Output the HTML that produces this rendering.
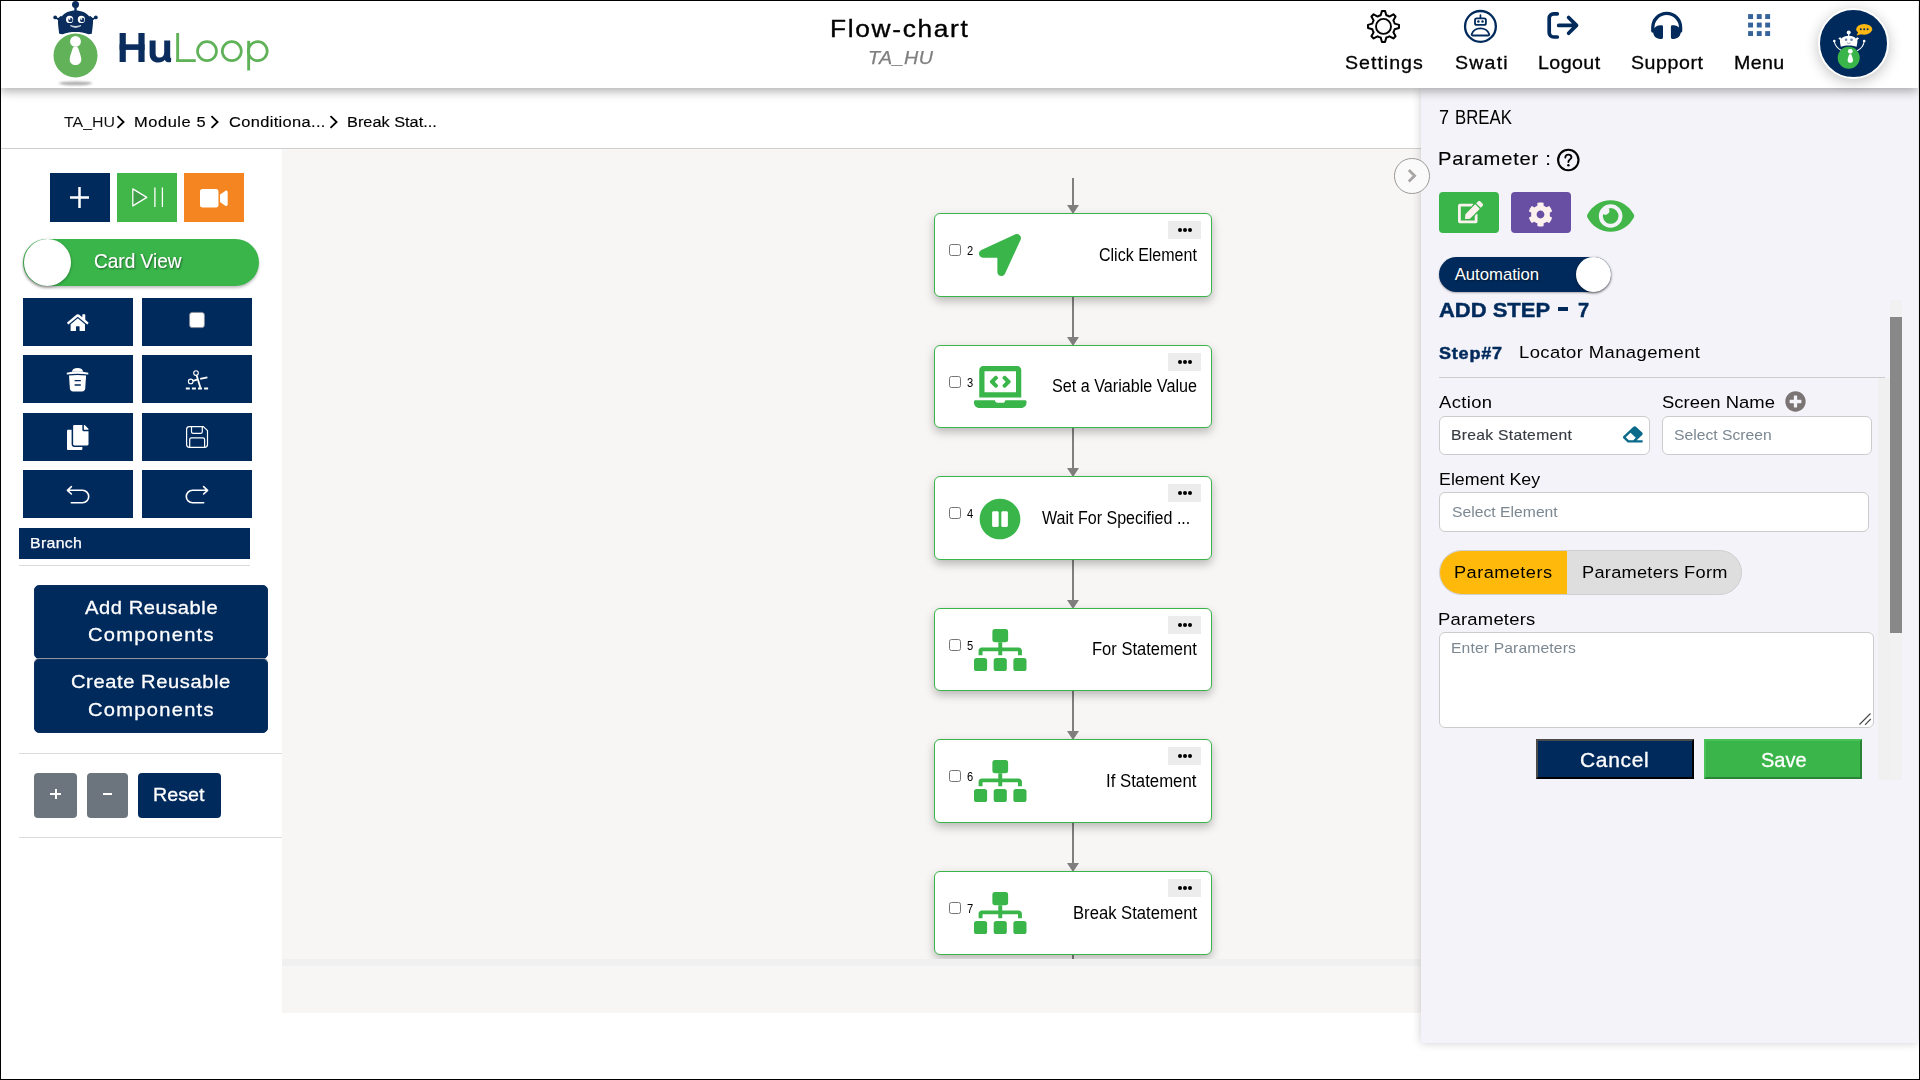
<!DOCTYPE html>
<html lang="en">
<head>
<meta charset="utf-8">
<title>Flow-chart</title>
<style>
*{box-sizing:border-box;margin:0;padding:0}
html,body{width:1920px;height:1080px;overflow:hidden;background:#fff;font-family:"Liberation Sans",sans-serif;color:#000}
#app{position:absolute;left:0;top:0;width:1920px;height:1080px;overflow:hidden;background:#fff}
.abs{position:absolute}
.t{position:absolute;white-space:pre;line-height:1;transform-origin:0 0;font-family:"Liberation Sans",sans-serif}
.m{-webkit-text-stroke:0.35px currentColor}
svg{position:absolute;overflow:visible}
.navy{background:#012a5c}
/* frame */
#frame{position:absolute;left:0;top:0;width:1920px;height:1080px;border:1px solid #000;z-index:100;pointer-events:none}
/* header */
#header{position:absolute;left:0;top:0;width:1918px;height:88px;background:#fff;box-shadow:0 3px 10px rgba(0,0,0,.33);z-index:20}
/* breadcrumb line */
#bcline{position:absolute;left:0;top:148px;width:1421px;height:1px;background:#cfcfcf}
/* canvas */
#canvas{position:absolute;left:282px;top:149px;width:1140px;height:810px;background:#f7f6f4;overflow:hidden}
#canvas2{position:absolute;left:282px;top:959px;width:1140px;height:54px;background:#f7f6f4}
#hscroll{position:absolute;left:0;top:0;width:1140px;height:7px;background:#f0f0f0}
.card{position:absolute;left:652px;width:278px;height:84px;background:#fff;border:1px solid #3bb44a;border-radius:6px;box-shadow:0 4px 10px rgba(0,0,0,.26)}
.dots{position:absolute;left:233px;top:7px;width:33px;height:18px;background:#ececec}
.dots i{position:absolute;top:6.8px;width:4.1px;height:4.1px;border-radius:50%;background:#000}
.cb{position:absolute;left:14px;top:30px;width:12px;height:12px;border:1px solid #767676;border-radius:2.5px;background:#fff}
.vline{position:absolute;left:790px;width:2px;background:#7f7f7f}
.ah{position:absolute;left:785px;width:0;height:0;border-left:6px solid transparent;border-right:6px solid transparent;border-top:9px solid #7f7f7f}
/* sidebar */
.sbtn{position:absolute;background:#012a5c}
.hr{position:absolute;height:1px;background:#dcdcdc}
/* panel */
#panel{position:absolute;left:1421px;top:88px;width:497px;height:955px;background:#f3f3f9;box-shadow:0 0 9px rgba(0,0,0,.2);z-index:10}
.inp{position:absolute;background:#fff;border:1px solid #cccccc;border-radius:6px}
</style>
</head>
<body>
<div id="app">

<!-- ================= BREADCRUMB ================= -->
<div id="bcline"></div>
<span class="t" style="left:63.80px;top:114px;font-size:15.5px;letter-spacing:0.000px;transform:scaleX(1.0254);color:#111">TA_HU</span>
<span class="t" style="left:133.94px;top:114px;font-size:15.5px;letter-spacing:0.529px;transform:scaleX(1.0600);color:#000;-webkit-text-stroke:0.15px #000">Module 5</span>
<span class="t" style="left:229.00px;top:114px;font-size:15.5px;letter-spacing:0.325px;transform:scaleX(1.0600);color:#000;-webkit-text-stroke:0.15px #000">Conditiona...</span>
<span class="t" style="left:346.95px;top:114px;font-size:15.5px;letter-spacing:0.000px;transform:scaleX(1.0532);color:#000;-webkit-text-stroke:0.15px #000">Break Stat...</span>
<svg style="left:116px;top:115px" width="10" height="14" viewBox="0 0 10 14"><path d="M1.5 1.2 L7.6 7 L1.5 12.8" fill="none" stroke="#000" stroke-width="1.8"/></svg>
<svg style="left:209.5px;top:115px" width="10" height="14" viewBox="0 0 10 14"><path d="M1.5 1.2 L7.6 7 L1.5 12.8" fill="none" stroke="#000" stroke-width="1.8"/></svg>
<svg style="left:328.5px;top:115px" width="10" height="14" viewBox="0 0 10 14"><path d="M1.5 1.2 L7.6 7 L1.5 12.8" fill="none" stroke="#000" stroke-width="1.8"/></svg>

<!-- ================= SIDEBAR ================= -->
<div id="sidebar">
  <div class="sbtn" style="left:50px;top:173px;width:60px;height:49px"></div>
  <div class="sbtn" style="left:117px;top:173px;width:60px;height:49px;background:#41b649"></div>
  <div class="sbtn" style="left:184px;top:173px;width:60px;height:49px;background:#f58521"></div>

  <div class="abs" style="left:23px;top:239px;width:236px;height:47px;border-radius:24px;background:#3ab54a;box-shadow:0 2px 3px rgba(0,0,0,.25)"></div>
  <div class="abs" style="left:24px;top:239px;width:47px;height:47px;border-radius:50%;background:#fff;box-shadow:0 1px 3px rgba(0,0,0,.35)"></div>
  <span class="t" style="left:94.06px;top:251px;font-size:20.3px;letter-spacing:0.000px;transform:scaleX(0.9401);color:#fff;text-shadow:1px 1px 2px rgba(0,0,0,.5);-webkit-text-stroke:0.15px #fff">Card View</span>

  <div class="sbtn" style="left:23px;top:298px;width:110px;height:48px"></div>
  <div class="sbtn" style="left:142px;top:298px;width:110px;height:48px"></div>
  <div class="sbtn" style="left:23px;top:355px;width:110px;height:48px"></div>
  <div class="sbtn" style="left:142px;top:355px;width:110px;height:48px"></div>
  <div class="sbtn" style="left:23px;top:413px;width:110px;height:48px"></div>
  <div class="sbtn" style="left:142px;top:413px;width:110px;height:48px"></div>
  <div class="sbtn" style="left:23px;top:470px;width:110px;height:48px"></div>
  <div class="sbtn" style="left:142px;top:470px;width:110px;height:48px"></div>

  <div class="sbtn" style="left:19px;top:528px;width:231px;height:31px"></div>
  <span class="t" style="left:30.44px;top:535px;font-size:15px;letter-spacing:0.291px;transform:scaleX(1.0600);color:#fff;-webkit-text-stroke:0.25px #fff">Branch</span>
  <div class="hr" style="left:19px;top:565px;width:231px"></div>

  <div class="sbtn" style="left:34px;top:585px;width:234px;height:74px;border-radius:5px;border:1px solid #0a2f5f"></div>
  <div class="sbtn" style="left:34px;top:659px;width:234px;height:74px;border-radius:5px;border:1px solid #0a2f5f;box-shadow:0 -1px 0 #8d939c"></div>
  <span class="t" style="left:84.70px;top:598px;font-size:19px;letter-spacing:0.521px;transform:scaleX(1.0600);color:#fff;-webkit-text-stroke:0.3px #fff">Add Reusable</span>
  <span class="t" style="left:88.30px;top:625px;font-size:19px;letter-spacing:1.188px;transform:scaleX(1.0600);color:#fff;-webkit-text-stroke:0.3px #fff">Components</span>
  <span class="t" style="left:71.40px;top:672px;font-size:19px;letter-spacing:0.543px;transform:scaleX(1.0600);color:#fff;-webkit-text-stroke:0.3px #fff">Create Reusable</span>
  <span class="t" style="left:88.30px;top:700px;font-size:19px;letter-spacing:1.188px;transform:scaleX(1.0600);color:#fff;-webkit-text-stroke:0.3px #fff">Components</span>
  <div class="hr" style="left:19px;top:753px;width:263px"></div>

  <div class="abs" style="left:34px;top:773px;width:43px;height:45px;border-radius:4px;background:#6c757d"></div>
  <div class="abs" style="left:87px;top:773px;width:41px;height:45px;border-radius:4px;background:#6c757d"></div>
  <div class="sbtn" style="left:138px;top:773px;width:83px;height:45px;border-radius:4px"></div>
  <div class="abs" style="left:50.200px;top:793px;width:10.600px;height:2px;background:#fff"></div>
  <div class="abs" style="left:54.500px;top:788.700px;width:2px;height:10.600px;background:#fff"></div>
  <div class="abs" style="left:103.400px;top:793px;width:8.400px;height:2px;background:#fff"></div>
  <span class="t" style="left:153.36px;top:785px;font-size:19px;letter-spacing:0.000px;transform:scaleX(1.0354);color:#fff;-webkit-text-stroke:0.3px #fff">Reset</span>
  <div class="hr" style="left:19px;top:837px;width:263px"></div>

  <!-- sidebar icons -->
  <svg style="left:0;top:149px" width="282" height="400" viewBox="0 149 282 400">
    <!-- plus -->
    <path d="M70 197.400 H89 M79.500 187 V208" stroke="#fff" stroke-width="2.500" fill="none"/>
    <!-- play / pause -->
    <path d="M132.800 188.900 L146.800 197.400 L132.800 205.900 Z" fill="#3f9f49" stroke="#fff" stroke-width="1.250" stroke-linejoin="round"/>
    <path d="M154.900 187.500 V207 M162.400 187.500 V207" stroke="#fff" stroke-width="1.300" fill="none"/>
    <!-- stop square -->
    <rect x="189.600" y="312.400" width="14.800" height="15.200" rx="2.600" fill="#fff" stroke="#8a8f99" stroke-width=".8"/>
    <!-- trash -->
    <g fill="#fff">
      <path d="M72 371.800 C72 369.600 74 368 77.500 368 C81 368 83 369.600 83 371.800 Z"/>
      <path d="M66.800 372.700 Q77.500 370.300 88.300 372.700 L88.300 374.500 Q77.500 372.900 66.800 374.500 Z"/>
      <path d="M69 375.600 Q77.500 374.600 86.100 375.600 L85.200 388.600 Q85 391.400 82 391.400 H73.100 Q70.100 391.400 69.900 388.600 Z"/>
    </g>
    <path d="M74.600 380.600 H80.800 M74.600 385 H80.800" stroke="#012a5c" stroke-width="1.400" fill="none"/>
    <!-- scissors cut -->
    <g fill="none" stroke="#fff">
      <circle cx="196" cy="373.100" r="2.300" stroke-width="1.100"/>
      <circle cx="190.700" cy="381.400" r="2.300" stroke-width="1.100"/>
      <path d="M196.700 375.400 L200.400 387.800" stroke-width="1.800"/>
      <path d="M192.900 380.800 L197.300 379.700 M200.200 378.900 L207.400 377.400" stroke-width="1.800"/>
      <path d="M185.800 388.400 H208.200" stroke-width="2" stroke-dasharray="4 2.100"/>
    </g>
    <!-- save (outline floppy) -->
    <g fill="none" stroke="#fff" stroke-width="1.200" stroke-linejoin="round">
      <path d="M189.400 426.600 H203.400 L207.500 430.700 V444.600 Q207.500 447.400 204.700 447.400 H189.400 Q186.600 447.400 186.600 444.600 V429.400 Q186.600 426.600 189.400 426.600 Z"/>
      <path d="M191.500 426.800 V431.700 Q191.500 433.300 193.100 433.300 H200.700 Q202.300 433.300 202.300 431.700 V426.800"/>
      <path d="M189.700 447.200 V439.500 Q189.700 437.800 191.400 437.800 H202.900 Q204.600 437.800 204.600 439.500 V447.200"/>
    </g>
    <!-- undo / redo -->
    <g fill="none" stroke="#fff" stroke-width="1.600" stroke-linecap="round" stroke-linejoin="round">
      <path d="M71.300 502.700 H82.500 A6.200 6.200 0 0 0 82.500 490.300 H67.700 M71.400 486.600 L67.400 490.300 L71.400 494"/>
      <path d="M203.700 502.700 H192.500 A6.200 6.200 0 0 1 192.500 490.300 H207.300 M203.600 486.600 L207.600 490.300 L203.600 494"/>
    </g>
  </svg>
  <!-- video -->
  <svg style="left:200.300px;top:185.900px" width="27.700" height="24.620" viewBox="0 0 576 512"><path fill="#fff" d="M336.200 64H47.800C21.400 64 0 85.400 0 111.800v288.400C0 426.600 21.400 448 47.800 448h288.400c26.400 0 47.800-21.400 47.800-47.800V111.800c0-26.400-21.400-47.800-47.800-47.800zm189.400 37.700L416 177.300v157.400l109.600 75.500c21.200 14.600 50.400-.3 50.400-25.800V127.500c0-25.400-29.100-40.400-50.400-25.800z"/></svg>
  <!-- home -->
  <svg style="left:66.700px;top:312.700px" width="21.600" height="19.200" viewBox="0 0 576 512"><path fill="#fff" d="M280.370 148.260L96 300.110V464a16 16 0 0 0 16 16l112.060-.29a16 16 0 0 0 15.920-16V368a16 16 0 0 1 16-16h64a16 16 0 0 1 16 16v95.640a16 16 0 0 0 16 16.050L464 480a16 16 0 0 0 16-16V300L295.670 148.260a12.190 12.190 0 0 0-15.300 0zM571.600 251.470L488 182.560V44.050a12 12 0 0 0-12-12h-56a12 12 0 0 0-12 12v72.610L318.470 43a48 48 0 0 0-61 0L4.340 251.470a12 12 0 0 0-1.600 16.900l25.500 31A12 12 0 0 0 45.150 301l235.220-193.740a12.190 12.190 0 0 1 15.300 0L530.900 301a12 12 0 0 0 16.900-1.600l25.500-31a12 12 0 0 0-1.700-16.930z"/></svg>
  <!-- copy -->
  <svg style="left:66.700px;top:424.600px" width="21.500" height="25.100" preserveAspectRatio="none" viewBox="0 0 448 512"><path fill="#fff" d="M320 448v40c0 13.255-10.745 24-24 24H24c-13.255 0-24-10.745-24-24V120c0-13.255 10.745-24 24-24h72v296c0 30.879 25.121 56 56 56h168zm0-344V0H152c-13.255 0-24 10.745-24 24v368c0 13.255 10.745 24 24 24h272c13.255 0 24-10.745 24-24V128H344c-13.200 0-24-10.800-24-24zm120.971-31.029L375.029 7.029A24 24 0 0 0 358.059 0H352v96h96v-6.059a24 24 0 0 0-7.029-16.970z"/></svg>
</div>

<!-- ================= CANVAS ================= -->
<div id="canvas2"><div id="hscroll"></div></div>
<div id="canvas">
  <div class="vline" style="top:29px;height:29px"></div><div class="ah" style="top:55.5px"></div>
  <div class="vline" style="top:148px;height:42px"></div><div class="ah" style="top:187.5px"></div>
  <div class="vline" style="top:279px;height:42px"></div><div class="ah" style="top:318.5px"></div>
  <div class="vline" style="top:411px;height:42px"></div><div class="ah" style="top:450.5px"></div>
  <div class="vline" style="top:542px;height:42px"></div><div class="ah" style="top:581.5px"></div>
  <div class="vline" style="top:674px;height:42px"></div><div class="ah" style="top:713.5px"></div>
  <div class="vline" style="top:806px;height:4px"></div>
  <div class="card" style="top:64px;height:84px"><div class="cb"></div><div class="dots"><i style="left:9.6px"></i><i style="left:14.6px"></i><i style="left:19.6px"></i></div><svg style="left:44px;top:20px" width="42" height="42" viewBox="0 0 512 512"><path fill="#3ab54a" d="M444.52 3.52L28.74 195.42c-47.97 22.39-31.98 92.75 19.19 92.75h175.91v175.91c0 51.17 70.36 67.17 92.75 19.19l191.9-415.78c15.99-38.39-25.59-79.97-63.97-63.97z"/></svg></div>
  <span class="t" style="left:684.70px;top:96px;font-size:12px;letter-spacing:0.000px;transform:scaleX(0.9286);color:#000">2</span>
  <span class="t" style="left:817.00px;top:98px;font-size:17.5px;letter-spacing:0.000px;transform:scaleX(0.9149);color:#000">Click Element</span>
  <div class="card" style="top:196px;height:83px"><div class="cb"></div><div class="dots"><i style="left:9.6px"></i><i style="left:14.6px"></i><i style="left:19.6px"></i></div><svg style="left:38.75px;top:20px" width="52.5" height="42" viewBox="0 0 640 512"><path fill="#3ab54a" d="M255.03 261.65c6.25 6.25 16.38 6.25 22.63 0l11.31-11.31c6.25-6.25 6.25-16.38 0-22.63L253.250 192l35.71-35.72c6.25-6.25 6.25-16.38 0-22.63l-11.31-11.31c-6.25-6.25-16.38-6.25-22.63 0l-58.34 58.34c-6.25 6.25-6.25 16.38 0 22.63l58.35 58.34zm96.01-11.3l11.31 11.31c6.25 6.25 16.38 6.25 22.63 0l58.34-58.34c6.25-6.25 6.25-16.38 0-22.63l-58.34-58.34c-6.25-6.25-16.38-6.25-22.63 0l-11.31 11.31c-6.25 6.25-6.25 16.38 0 22.63L386.750 192l-35.71 35.720c-6.25 6.25-6.25 16.38 0 22.63zM624 416H381.540c-.74 19.81-14.71 32-32.74 32H288c-18.69 0-33.02-17.47-32.77-32H16c-8.8 0-16 7.2-16 16v16c0 35.2 28.8 64 64 64h512c35.2 0 64-28.8 64-64v-16c0-8.8-7.2-16-16-16zM576 48c0-26.4-21.6-48-48-48H112C85.6 0 64 21.6 64 48v336h512V48zm-64 272H128V64h384v256z"/></svg></div>
  <span class="t" style="left:684.70px;top:228px;font-size:12px;letter-spacing:0.000px;transform:scaleX(0.9286);color:#000">3</span>
  <span class="t" style="left:770.40px;top:229px;font-size:17.5px;letter-spacing:0.000px;transform:scaleX(0.9237);color:#000">Set a Variable Value</span>
  <div class="card" style="top:327px;height:84px"><div class="cb"></div><div class="dots"><i style="left:9.6px"></i><i style="left:14.6px"></i><i style="left:19.6px"></i></div><svg style="left:44px;top:21.2px" width="42" height="42" viewBox="0 0 512 512"><path fill="#3ab54a" d="M256 8C119 8 8 119 8 256s111 248 248 248 248-111 248-248S393 8 256 8zm-16 328c0 8.8-7.2 16-16 16h-48c-8.8 0-16-7.2-16-16V176c0-8.8 7.2-16 16-16h48c8.8 0 16 7.2 16 16v160zm112 0c0 8.8-7.2 16-16 16h-48c-8.8 0-16-7.2-16-16V176c0-8.8 7.2-16 16-16h48c8.8 0 16 7.2 16 16v160z"/></svg></div>
  <span class="t" style="left:684.70px;top:359px;font-size:12px;letter-spacing:0.000px;transform:scaleX(0.9286);color:#000">4</span>
  <span class="t" style="left:759.80px;top:361px;font-size:17.5px;letter-spacing:0.000px;transform:scaleX(0.9167);color:#000">Wait For Specified ...</span>
  <div class="card" style="top:459px;height:83px"><div class="cb"></div><div class="dots"><i style="left:9.6px"></i><i style="left:14.6px"></i><i style="left:19.6px"></i></div><svg style="left:38.75px;top:20px" width="52.5" height="42" viewBox="0 0 640 512"><g fill="#3ab54a"><rect x="224" y="0" width="192" height="160" rx="32"/><rect x="0" y="352" width="160" height="160" rx="32"/><rect x="240" y="352" width="160" height="160" rx="32"/><rect x="480" y="352" width="160" height="160" rx="32"/><path d="M296 160h48v64h201.600c21.200 0 38.400 17.200 38.400 38.400V320h-48v-48H344v48h-48v-48H104v48H56v-57.600c0-21.200 17.200-38.400 38.400-38.400H296z"/></g></svg></div>
  <span class="t" style="left:684.70px;top:491px;font-size:12px;letter-spacing:0.000px;transform:scaleX(0.9286);color:#000">5</span>
  <span class="t" style="left:809.75px;top:492px;font-size:17.5px;letter-spacing:0.000px;transform:scaleX(0.9453);color:#000">For Statement</span>
  <div class="card" style="top:590px;height:84px"><div class="cb"></div><div class="dots"><i style="left:9.6px"></i><i style="left:14.6px"></i><i style="left:19.6px"></i></div><svg style="left:38.75px;top:20px" width="52.5" height="42" viewBox="0 0 640 512"><g fill="#3ab54a"><rect x="224" y="0" width="192" height="160" rx="32"/><rect x="0" y="352" width="160" height="160" rx="32"/><rect x="240" y="352" width="160" height="160" rx="32"/><rect x="480" y="352" width="160" height="160" rx="32"/><path d="M296 160h48v64h201.600c21.200 0 38.400 17.200 38.400 38.400V320h-48v-48H344v48h-48v-48H104v48H56v-57.600c0-21.200 17.200-38.400 38.400-38.400H296z"/></g></svg></div>
  <span class="t" style="left:684.70px;top:622px;font-size:12px;letter-spacing:0.000px;transform:scaleX(0.9286);color:#000">6</span>
  <span class="t" style="left:824.24px;top:624px;font-size:17.5px;letter-spacing:0.000px;transform:scaleX(0.9584);color:#000">If Statement</span>
  <div class="card" style="top:722px;height:84px"><div class="cb"></div><div class="dots"><i style="left:9.6px"></i><i style="left:14.6px"></i><i style="left:19.6px"></i></div><svg style="left:38.75px;top:20px" width="52.5" height="42" viewBox="0 0 640 512"><g fill="#3ab54a"><rect x="224" y="0" width="192" height="160" rx="32"/><rect x="0" y="352" width="160" height="160" rx="32"/><rect x="240" y="352" width="160" height="160" rx="32"/><rect x="480" y="352" width="160" height="160" rx="32"/><path d="M296 160h48v64h201.600c21.200 0 38.400 17.200 38.400 38.400V320h-48v-48H344v48h-48v-48H104v48H56v-57.600c0-21.200 17.200-38.400 38.400-38.400H296z"/></g></svg></div>
  <span class="t" style="left:684.70px;top:754px;font-size:12px;letter-spacing:0.000px;transform:scaleX(0.9286);color:#000">7</span>
  <span class="t" style="left:790.55px;top:756px;font-size:17.5px;letter-spacing:0.000px;transform:scaleX(0.9515);color:#000">Break Statement</span>
</div>

<!-- ================= RIGHT PANEL ================= -->
<div id="panel"></div>
<div id="pcontent" style="position:absolute;left:0;top:0;z-index:11">

  <!-- collapse button -->
  <div class="abs" style="left:1394.200px;top:158px;width:35.600px;height:35.600px;border-radius:50%;background:#fbfafa;border:1px solid #9a9797"></div>
  <svg style="left:1406px;top:167px" width="12" height="18" viewBox="0 0 12 18"><path d="M2.800 3 L8.600 8.800 L2.800 14.600" fill="none" stroke="#a9a5a5" stroke-width="2.800"/></svg>

  <span class="t" style="left:1438.58px;top:108px;font-size:19.6px;letter-spacing:0.000px;transform:scaleX(0.9222);color:#000">7</span>
  <span class="t" style="left:1454.94px;top:108px;font-size:19.6px;letter-spacing:0.000px;transform:scaleX(0.8553);color:#000">BREAK</span>
  <span class="t" style="left:1438.44px;top:149px;font-size:19px;letter-spacing:0.727px;transform:scaleX(1.0600);color:#000;-webkit-text-stroke:0.15px #000">Parameter :</span>
  <svg style="left:1556px;top:148px" width="25" height="25" viewBox="0 0 25 25"><circle cx="12.300" cy="12" r="10.200" fill="none" stroke="#000" stroke-width="2.100"/><path d="M9.300 9.600 C9.300 7.700 10.600 6.600 12.400 6.600 C14.200 6.600 15.400 7.700 15.400 9.200 C15.400 11.400 12.400 11.400 12.400 14" fill="none" stroke="#000" stroke-width="1.900" stroke-linecap="round"/><circle cx="12.400" cy="17.300" r="1.250" fill="#000"/></svg>

  <!-- action buttons -->
  <div class="abs" style="left:1439px;top:192px;width:60px;height:41px;border-radius:4px;background:#3ab54a"></div>
  <div class="abs" style="left:1511px;top:192px;width:60px;height:41px;border-radius:4px;background:#684fa3"></div>

  <!-- edit -->
  <svg style="left:1457.900px;top:200.900px" width="25.100" height="22.300" viewBox="0 0 576 512"><path fill="#fdf1ee" d="M402.600 83.200l90.200 90.200c3.800 3.800 3.800 10 0 13.800L274.400 405.600l-92.800 10.300c-12.400 1.400-22.900-9.100-21.500-21.500l10.300-92.800L388.800 83.200c3.800-3.800 10-3.800 13.800 0zm162-22.900l-48.800-48.800c-15.200-15.200-39.900-15.200-55.200 0l-35.400 35.400c-3.800 3.800-3.800 10 0 13.800l90.200 90.200c3.800 3.800 10 3.800 13.800 0l35.400-35.400c15.200-15.300 15.200-40 0-55.200zM384 346.200V448H64V128h229.800c3.200 0 6.200-1.300 8.500-3.500l40-40c7.600-7.600 2.200-20.500-8.500-20.500H48C21.500 64 0 85.500 0 112v352c0 26.500 21.500 48 48 48h352c26.500 0 48-21.500 48-48V306.200c0-10.700-12.900-16-20.500-8.500l-40 40c-2.200 2.300-3.500 5.300-3.500 8.500z"/></svg>
  <!-- cog -->
  <svg style="left:1527.950px;top:201.750px" width="25" height="25" viewBox="0 0 512 512"><path fill="#fdf1ee" d="M487.4 315.7l-42.6-24.600c4.300-23.200 4.300-47 0-70.200l42.600-24.600c4.900-2.800 7.100-8.600 5.500-14-11.100-35.600-30-67.800-54.700-94.600-3.800-4.100-10-5.100-14.800-2.300L380.800 110c-17.900-15.400-38.500-27.300-60.800-35.100V25.800c0-5.600-3.900-10.500-9.400-11.700-36.700-8.200-74.300-7.800-109.200 0-5.500 1.200-9.400 6.100-9.400 11.700V75c-22.200 7.900-42.800 19.800-60.800 35.100L88.700 85.500c-4.900-2.800-11-1.900-14.800 2.300-24.700 26.700-43.600 58.900-54.700 94.600-1.700 5.400.6 11.200 5.500 14L67.300 221c-4.300 23.200-4.300 47 0 70.200l-42.600 24.600c-4.900 2.800-7.100 8.600-5.500 14 11.100 35.600 30 67.800 54.700 94.600 3.800 4.100 10 5.100 14.800 2.300l42.600-24.600c17.900 15.400 38.500 27.300 60.800 35.100v49.200c0 5.600 3.900 10.500 9.400 11.700 36.700 8.200 74.300 7.800 109.200 0 5.500-1.200 9.400-6.100 9.400-11.700v-49.200c22.200-7.900 42.800-19.800 60.800-35.100l42.600 24.600c4.900 2.800 11 1.900 14.800-2.300 24.700-26.700 43.600-58.900 54.700-94.600 1.500-5.500-.7-11.300-5.600-14.100zM256 336c-44.100 0-80-35.900-80-80s35.900-80 80-80 80 35.900 80 80-35.900 80-80 80z"/></svg>
  <!-- eye -->
  <svg style="left:1586.900px;top:195px" width="47.250" height="42" viewBox="0 0 576 512"><path fill="#42b649" d="M572.520 241.400C518.290 135.590 410.930 64 288 64S57.680 135.640 3.480 241.410a32.350 32.350 0 0 0 0 29.190C57.710 376.410 165.070 448 288 448s230.320-71.640 284.520-177.410a32.350 32.350 0 0 0 0-29.190zM288 400a144 144 0 1 1 144-144 143.930 143.930 0 0 1-144 144zm0-240a95.310 95.310 0 0 0-25.310 3.790 47.850 47.850 0 0 1-66.900 66.900A95.780 95.780 0 1 0 288 160z"/></svg>
  <!-- plus-circle -->
  <svg style="left:1785px;top:391px" width="21" height="21" viewBox="0 0 512 512"><path fill="#7b7474" d="M256 8C119 8 8 119 8 256s111 248 248 248 248-111 248-248S393 8 256 8zm144 276c0 6.600-5.400 12-12 12h-92v92c0 6.600-5.400 12-12 12h-56c-6.600 0-12-5.400-12-12v-92h-92c-6.600 0-12-5.400-12-12v-56c0-6.600 5.400-12 12-12h92v-92c0-6.600 5.400-12 12-12h56c6.600 0 12 5.400 12 12v92h92c6.600 0 12 5.400 12 12v56z"/></svg>

  <!-- automation toggle -->
  <div class="abs" style="left:1439px;top:257px;width:172px;height:35px;border-radius:18px;background:#012a5c;box-shadow:0 1px 2px rgba(0,0,0,.3)"></div>
  <div class="abs" style="left:1576px;top:257px;width:35px;height:35px;border-radius:50%;background:#fff;box-shadow:0 1px 3px rgba(0,0,0,.45)"></div>
  <span class="t" style="left:1454.70px;top:267px;font-size:16.7px;letter-spacing:0.000px;color:#fff;text-shadow:1px 1px 2px rgba(0,0,0,.5)">Automation</span>

  <span class="t" style="left:1438.80px;top:299px;font-size:21px;letter-spacing:0.000px;transform:scaleX(1.0464);color:#012a5c;font-weight:bold;-webkit-text-stroke:0.45px #012a5c">ADD STEP</span>
  <span class="t" style="left:1577.50px;top:299px;font-size:21px;letter-spacing:0.000px;transform:scaleX(0.9545);color:#012a5c;font-weight:bold;-webkit-text-stroke:0.45px #012a5c">7</span>
  <div class="abs" style="left:1558.200px;top:307.200px;width:9.700px;height:3.400px;background:#012a5c"></div>
  <span class="t" style="left:1438.80px;top:345px;font-size:17px;letter-spacing:0.753px;transform:scaleX(1.0600);color:#012a5c;font-weight:bold;-webkit-text-stroke:0.5px #012a5c">Step#7</span>
  <span class="t" style="left:1518.54px;top:344px;font-size:17.4px;letter-spacing:0.376px;transform:scaleX(1.0600);color:#000">Locator Management</span>
  <div class="hr" style="left:1439px;top:377px;width:446px;background:#cdcdcd"></div>

  <!-- scrollbars -->
  <div class="abs" style="left:1878px;top:378px;width:12px;height:402px;background:#f0f0f0"></div>
  <div class="abs" style="left:1890px;top:300px;width:12px;height:480px;background:#f1f1f1"></div>
  <div class="abs" style="left:1890px;top:317px;width:12px;height:316px;background:#888888"></div>

  <span class="t" style="left:1439.30px;top:394px;font-size:17.4px;letter-spacing:0.354px;transform:scaleX(1.0600);color:#000">Action</span>
  <span class="t" style="left:1662.30px;top:394px;font-size:17.4px;letter-spacing:0.020px;transform:scaleX(1.0600);color:#000">Screen Name</span>
  <div class="inp" style="left:1439px;top:416px;width:211px;height:39px"></div>
  <div class="inp" style="left:1662px;top:416px;width:210px;height:39px"></div>
  <span class="t" style="left:1450.74px;top:428px;font-size:14.8px;letter-spacing:0.273px;transform:scaleX(1.0600);color:#353b41;-webkit-text-stroke:0.15px #353b41">Break Statement</span>
  <span class="t" style="left:1674.00px;top:428px;font-size:14.8px;letter-spacing:0.008px;transform:scaleX(1.0600);color:#7b8791">Select Screen</span>

  <span class="t" style="left:1438.97px;top:471px;font-size:17.4px;letter-spacing:0.000px;transform:scaleX(1.0255);color:#000">Element Key</span>
  <div class="inp" style="left:1439px;top:492px;width:430px;height:40px"></div>
  <span class="t" style="left:1451.60px;top:505px;font-size:14.8px;letter-spacing:0.017px;transform:scaleX(1.0600);color:#7b8791">Select Element</span>

  <!-- tabs -->
  <div class="abs" style="left:1439px;top:550px;width:303px;height:45px;border-radius:23px;background:#dedede;border:1px solid #cfcfcf;overflow:hidden"><div style="position:absolute;left:-1px;top:-1px;width:127.800px;height:45px;background:#feb90b"></div></div>
  <span class="t" style="left:1454.24px;top:564px;font-size:17.2px;letter-spacing:0.401px;transform:scaleX(1.0600);color:#000">Parameters</span>
  <span class="t" style="left:1581.54px;top:564px;font-size:17.2px;letter-spacing:0.247px;transform:scaleX(1.0600);color:#000">Parameters Form</span>

  <span class="t" style="left:1438.44px;top:611px;font-size:17.4px;letter-spacing:0.206px;transform:scaleX(1.0600);color:#000">Parameters</span>
  <div class="inp" style="left:1439px;top:632px;width:435px;height:96px"></div>
  <span class="t" style="left:1450.74px;top:641px;font-size:14.8px;letter-spacing:0.124px;transform:scaleX(1.0600);color:#7b8791">Enter Parameters</span>
  <svg style="left:1858px;top:712px" width="14" height="14" viewBox="0 0 14 14"><path d="M1.500 12.500 L12.500 1.500 M7 12.800 L12.800 7" stroke="#444" stroke-width="1.100" fill="none"/></svg>

  <!-- buttons -->
  <div class="abs" style="left:1536px;top:739px;width:158px;height:40px;background:#012a5c;border:2px solid;border-color:#4a4a4a #000 #000 #4a4a4a"></div>
  <div class="abs" style="left:1704px;top:739px;width:158px;height:40px;background:#3ab54a;border:2px solid;border-color:#49c259 #2a8436 #2a8436 #49c259"></div>
  <span class="t" style="left:1579.74px;top:751px;font-size:19.8px;letter-spacing:0.643px;transform:scaleX(1.0600);color:#fff;-webkit-text-stroke:0.3px #fff">Cancel</span>
  <span class="t" style="left:1760.80px;top:751px;font-size:19.8px;letter-spacing:0.000px;transform:scaleX(1.0114);color:#fff;-webkit-text-stroke:0.3px #fff">Save</span>
  <!-- eraser -->
  <svg style="left:1623.100px;top:425.300px" width="19.700" height="18.700" viewBox="0 0 512 512" preserveAspectRatio="none"><path fill="#0b6a8a" d="M497.941 273.941c18.745-18.745 18.745-49.137 0-67.882l-160-160c-18.745-18.745-49.136-18.746-67.883 0l-256 256c-18.745 18.745-18.745 49.137 0 67.882l96 96A48.004 48.004 0 0 0 144 480h356c6.627 0 12-5.373 12-12v-40c0-6.627-5.373-12-12-12H355.883l142.058-142.059zm-302.627-62.627l137.373 137.373L265.373 416H150.628l-80-80 124.686-124.686z"/></svg>
</div>

<!-- ================= HEADER ================= -->
<div id="header">
  <!-- logo robot -->
  <svg style="left:0;top:0" width="300" height="88" viewBox="0 0 300 88">
    <defs><filter id="blur1" x="-20%" y="-100%" width="140%" height="300%"><feGaussianBlur stdDeviation="1.1"/></filter></defs>
    <ellipse cx="75.5" cy="83.3" rx="16.5" ry="1.9" fill="#aeaeae" filter="url(#blur1)"/>
    <!-- head -->
    <g fill="#0b2d5e">
      <circle cx="75.5" cy="4.6" r="3.5"/>
      <rect x="74.3" y="6" width="2.4" height="6"/>
      <path d="M59.2 33.8 C58.6 28.5 57.8 24 58 20.5 L57.6 18.6 L61 15.8 L61.6 16.6 C64.5 12.6 69.5 10.4 75.5 10.4 C81.5 10.4 86.5 12.6 89.4 16.6 L90 15.8 L93.4 18.6 L93 20.5 C93.2 24 92.4 28.5 91.8 33.8 L88.5 34.2 C84.5 32.6 80 32 75.5 32 C71 32 66.5 32.6 62.5 34.2 Z"/>
      <circle cx="55.2" cy="17.4" r="1.9"/><circle cx="95.8" cy="17.4" r="1.9"/>
      <path d="M55.5 17.4 L60 20.5 M95.5 17.4 L91 20.5" stroke="#0b2d5e" stroke-width="1.6" fill="none"/>
    </g>
    <circle cx="69.6" cy="19.4" r="3.6" fill="#fff"/><circle cx="81.4" cy="19.4" r="3.6" fill="#fff"/>
    <circle cx="70.4" cy="19.9" r="2.2" fill="#0b2d5e"/><circle cx="82.2" cy="19.9" r="2.2" fill="#0b2d5e"/>
    <circle cx="69.6" cy="18.9" r="0.9" fill="#fff"/><circle cx="81.4" cy="18.9" r="0.9" fill="#fff"/>
    <path d="M70.3 25.6 Q75.5 29.2 81 25.6 Q75.6 27.4 70.3 25.6Z" fill="#fff" stroke="#fff" stroke-width="0.6"/>
    <!-- body -->
    <circle cx="75.5" cy="55.5" r="22" fill="#61b259"/>
    <circle cx="75.5" cy="41.4" r="5.4" fill="#fff"/>
    <path d="M75.5 46.5 C77.4 46.5 78.2 47.6 78.7 49.4 C79.8 53.4 81.3 56.2 81.3 59.4 C81.3 62.8 78.7 65 75.5 65 C72.3 65 69.7 62.8 69.7 59.4 C69.7 56.2 71.2 53.4 72.3 49.4 C72.8 47.6 73.6 46.5 75.5 46.5Z" fill="#fff"/>
    <!-- HuLoop wordmark -->
    <g fill="#0b2d5e">
      <rect x="119.6" y="33" width="6.2" height="29"/><rect x="138.4" y="33" width="6.2" height="29"/><rect x="119.6" y="44.3" width="25" height="5.6"/>
      <path d="M149.6 40.6 h6 v12.6 c0 3 1.4 4.4 4 4.4 c2.8 0 4.6 -1.9 4.6 -5.2 v-11.8 h6 v15.6 c0 1 .3 1.6 1 2 l-.2 3.9 c-3 .7 -5.400 -.2 -6.200 -2.400 c-1.400 1.800 -3.600 2.800 -6.400 2.800 c-5.400 0 -8.800 -3.200 -8.800 -8.800 z"/>
    </g>
    <g fill="#60b258">
      <rect x="176.2" y="33" width="2.9" height="29"/><rect x="176.2" y="59.2" width="19.6" height="2.8"/>
      <rect x="247.200" y="40.800" width="2.9" height="29.700"/>
    </g>
    <g fill="none" stroke="#60b258" stroke-width="2.7">
      <circle cx="207" cy="51.2" r="9.5"/><circle cx="231.800" cy="51.2" r="9.5"/><circle cx="257.700" cy="51.2" r="9.5"/>
    </g>
  </svg>
  <span class="t" style="left:830.38px;top:17px;font-size:24.8px;letter-spacing:1.585px;transform:scaleX(1.0600);color:#000;-webkit-text-stroke:0.4px #000">Flow-chart</span>
  <span class="t" style="left:867.64px;top:49px;font-size:18.6px;letter-spacing:0.449px;transform:scaleX(1.0600);color:#7f7f7f;font-style:italic;-webkit-text-stroke:0.25px #7f7f7f">TA_HU</span>
  <span class="t" style="left:1345.00px;top:54px;font-size:18.5px;letter-spacing:0.931px;transform:scaleX(1.0600);color:#000;-webkit-text-stroke:0.3px #000">Settings</span>
  <span class="t" style="left:1455.00px;top:54px;font-size:18.5px;letter-spacing:1.114px;transform:scaleX(1.0600);color:#000;-webkit-text-stroke:0.3px #000">Swati</span>
  <span class="t" style="left:1537.54px;top:54px;font-size:18.5px;letter-spacing:0.402px;transform:scaleX(1.0600);color:#000;-webkit-text-stroke:0.3px #000">Logout</span>
  <span class="t" style="left:1631.00px;top:54px;font-size:18.5px;letter-spacing:0.513px;transform:scaleX(1.0600);color:#000;-webkit-text-stroke:0.3px #000">Support</span>
  <span class="t" style="left:1733.74px;top:54px;font-size:18.5px;letter-spacing:0.381px;transform:scaleX(1.0600);color:#000;-webkit-text-stroke:0.3px #000">Menu</span>
  <svg style="left:0;top:0" width="1920" height="88" viewBox="0 0 1920 88">
    <!-- settings gear -->
    <path d="M1386.31 15.25 L1385.04 10.88 L1381.96 10.88 L1380.69 15.25 A11.50 11.50 0 0 0 1377.60 16.53 L1373.61 14.33 L1371.43 16.51 L1373.63 20.50 A11.50 11.50 0 0 0 1372.35 23.59 L1367.98 24.86 L1367.98 27.94 L1372.35 29.21 A11.50 11.50 0 0 0 1373.63 32.30 L1371.43 36.29 L1373.61 38.47 L1377.60 36.27 A11.50 11.50 0 0 0 1380.69 37.55 L1381.96 41.92 L1385.04 41.92 L1386.31 37.55 A11.50 11.50 0 0 0 1389.40 36.27 L1393.39 38.47 L1395.57 36.29 L1393.37 32.30 A11.50 11.50 0 0 0 1394.65 29.21 L1399.02 27.94 L1399.02 24.86 L1394.65 23.59 A11.50 11.50 0 0 0 1393.37 20.50 L1395.57 16.51 L1393.39 14.33 L1389.40 16.53 A11.50 11.50 0 0 0 1386.31 15.25 Z" fill="none" stroke="#000" stroke-width="2" stroke-linejoin="round"/>
    <circle cx="1383.5" cy="26.4" r="7.5" fill="none" stroke="#000" stroke-width="1.9"/>
    <!-- user robot -->
    <g fill="none" stroke="#012a5c">
      <circle cx="1480.45" cy="26.4" r="15.4" stroke-width="2.3"/>
      <rect x="1475" y="18.3" width="10.9" height="6.6" rx="1.7" stroke-width="1.8"/>
      <path d="M1480.45 15 V18" stroke-width="1.7" stroke-linecap="round"/>
      <path d="M1472.6 35.5 H1488.3 a1 1 0 0 0 .95 -1.3 C1488 30.600 1484.500 28.300 1480.450 28.300 C1476.400 28.300 1472.900 30.600 1471.650 34.200 a1 1 0 0 0 .95 1.300 Z" stroke-width="1.8" stroke-linejoin="round"/>
    </g>
    <circle cx="1478.400" cy="21.600" r="1.250" fill="#012a5c"/><circle cx="1482.500" cy="21.600" r="1.250" fill="#012a5c"/>
    <!-- logout -->
    <g fill="none" stroke="#012a5c" stroke-width="3.7" stroke-linecap="round" stroke-linejoin="round">
      <path d="M1557.3 13.8 H1553.6 a4.4 4.4 0 0 0 -4.4 4.4 V32.6 a4.4 4.4 0 0 0 4.4 4.4 H1557.3"/>
      <path d="M1558.700 25.400 H1576 M1568.600 17.500 L1576.500 25.400 L1568.600 33.300"/>
    </g>
    <!-- headphones -->
    <path d="M1652.800 31 V27.500 A13.900 14.100 0 0 1 1680.600 27.500 V31" fill="none" stroke="#012a5c" stroke-width="3.3" stroke-linecap="round"/>
    <path d="M1663 26.600 a1.400 1.400 0 0 0 -1.400 -1.400 h-1.400 c-4 0 -7 3.100 -7 6.900 c0 3.900 3 6.900 7 6.900 h1.400 a1.400 1.400 0 0 0 1.400 -1.400 z" fill="#012a5c"/>
    <path d="M1670.900 26.600 a1.400 1.400 0 0 1 1.400 -1.400 h1.400 c4 0 7 3.100 7 6.900 c0 3.900 -3 6.900 -7 6.900 h-1.400 a1.400 1.400 0 0 1 -1.400 -1.400 z" fill="#012a5c"/>
    <!-- menu grid -->
    <g fill="#35639a">
      <rect x="1748.100" y="14.100" width="4.900" height="4.900"/><rect x="1756.800" y="14.100" width="4.900" height="4.900"/><rect x="1765.200" y="14.100" width="4.900" height="4.900"/>
      <rect x="1748.100" y="22.600" width="4.900" height="4.900"/><rect x="1756.800" y="22.600" width="4.900" height="4.900"/><rect x="1765.200" y="22.600" width="4.900" height="4.900"/>
      <rect x="1748.100" y="31.100" width="4.900" height="4.900"/><rect x="1756.800" y="31.100" width="4.900" height="4.900"/><rect x="1765.200" y="31.100" width="4.900" height="4.900"/>
    </g>
  </svg>
  <!-- chatbot -->
  <div class="abs" style="left:1818px;top:7.500px;width:71px;height:71px;border-radius:50%;background:#012a5c;border:2px solid #fff;box-shadow:0 3px 14px rgba(0,0,0,.24)"></div>
  <svg style="left:0;top:0" width="1920" height="88" viewBox="0 0 1920 88">
    <g fill="none" stroke="#fff" stroke-width="1.1" stroke-linecap="round">
      <path d="M1841.500 50.500 C1837.500 48.500 1835 45.500 1834.300 41.500"/><path d="M1857.500 50.500 C1861.500 48.500 1863.500 45.500 1864.200 41.500"/>
    </g>
    <circle cx="1834.300" cy="41" r="1.300" fill="#fff"/><circle cx="1864.200" cy="41" r="1.300" fill="#fff"/>
    <g fill="#fff">
      <circle cx="1848.700" cy="32.600" r="2"/><rect x="1848.100" y="33.500" width="1.200" height="3.500"/>
      <path d="M1840.800 46.800 C1840.300 44 1839.800 41.800 1840 40 L1838.300 38.200 L1840.300 37.300 L1841.500 38.600 C1843 36.700 1845.600 35.800 1848.700 35.800 C1851.800 35.800 1854.400 36.700 1855.900 38.600 L1857.100 37.300 L1859.100 38.200 L1857.400 40 C1857.600 41.800 1857.100 44 1856.600 46.800 C1854 45.800 1851.400 45.500 1848.700 45.500 C1846 45.500 1843.400 45.800 1840.800 46.800Z"/>
    </g>
    <circle cx="1846.100" cy="39.800" r="1.300" fill="#6f86a8"/><circle cx="1851.500" cy="39.800" r="1.300" fill="#6f86a8"/>
    <path d="M1846.800 42.800 Q1848.800 44.300 1850.800 42.800" stroke="#6f86a8" stroke-width=".7" fill="none"/>
    <circle cx="1848.700" cy="57.800" r="11" fill="#3ab54a"/>
    <circle cx="1850.300" cy="51.300" r="2.400" fill="#fff"/>
    <path d="M1850.300 54.300 C1851.200 54.300 1851.600 54.800 1851.800 55.600 C1852.300 57.600 1853 58.800 1853 60.200 C1853 61.800 1851.800 62.800 1850.300 62.800 C1848.800 62.800 1847.600 61.800 1847.600 60.200 C1847.600 58.800 1848.300 57.600 1848.800 55.600 C1849 54.800 1849.400 54.300 1850.300 54.300Z" fill="#fff"/>
    <ellipse cx="1864.200" cy="29.300" rx="8" ry="5.400" fill="#fdb913"/>
    <path d="M1858.500 31.500 L1856.600 35.400 L1862 33.900Z" fill="#fdb913"/>
    <circle cx="1860.800" cy="29.300" r="1" fill="#012a5c"/><circle cx="1864.200" cy="29.300" r="1" fill="#012a5c"/><circle cx="1867.600" cy="29.300" r="1" fill="#012a5c"/>
  </svg>
</div>

</div>
<div id="frame"></div>
</body>
</html>
